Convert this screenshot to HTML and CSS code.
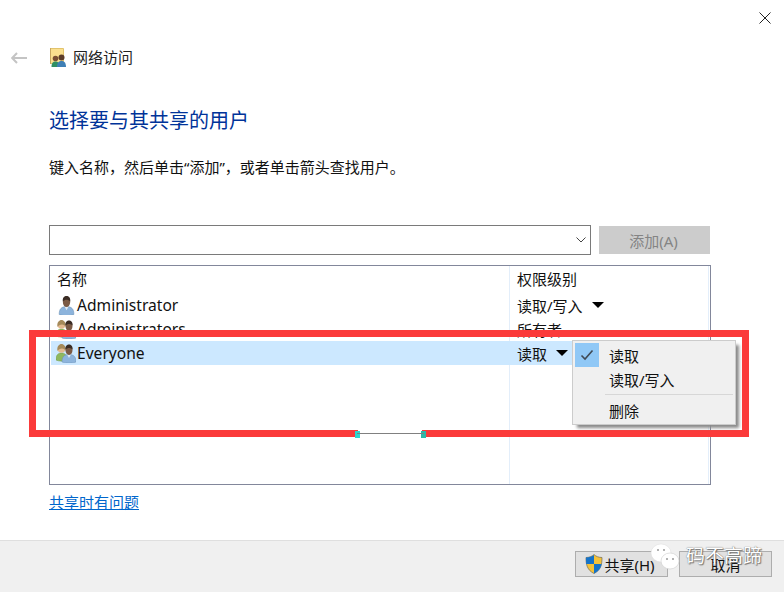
FILE: index.html
```html
<!DOCTYPE html>
<html lang="zh">
<head>
<meta charset="utf-8">
<title>网络访问</title>
<link rel="stylesheet" href="styles.css">
</head>
<body>
<svg width="0" height="0" class="defs">
  <defs>
    <g id="man">
      <path d="M0 18c0-5 2-7.500 7-7.500s7 2.500 7 7.500c-3 1.500-11 1.500-14 0z" fill="#8db4dc" stroke="#6b8fb5" stroke-width=".5"/>
      <path d="M5 10.500l2 3.500 2-3.500z" fill="#dfe9f3"/>
      <ellipse cx="7" cy="6" rx="3.500" ry="5" fill="#7b5a45"/>
      <path d="M3.500 5.500C3 2 5 .5 7 .5s4 1.500 3.500 5c-2-2-5-2-7 0z" fill="#3a2c24"/>
    </g>
    <g id="woman">
      <path d="M0 17c0-5 2-7 5.500-7s5.500 2 5.500 7c-3 1.500-8 1.500-11 0z" fill="#8fb85f" stroke="#6f9a45" stroke-width=".5"/>
      <circle cx="5.500" cy="6" r="3.800" fill="#e3b98f"/>
      <path d="M1.500 8c-.8-5 1.800-7 4-7s4.800 2 4 7C9 4.500 3 4.500 1.500 8z" fill="#a58a5a"/>
    </g>
  </defs>
</svg>
<main class="dialog">
  <div class="closebar">
    <svg class="close" width="12" height="12" viewBox="0 0 12 12"><path d="M.5.5l11 11M11.500.5l-11 11" stroke="#222" stroke-width="1" fill="none"/></svg>
  </div>
  <header class="nav">
    <svg class="back" width="16" height="12" viewBox="0 0 16 12"><path d="M6 1L1.200 6 6 11M1.500 6H16" stroke="#c4c4c4" stroke-width="2" fill="none"/></svg>
    <svg class="appicon" width="17" height="20" viewBox="0 0 17 20">
      <path d="M.5.500h13v15H.5z" fill="#fbe08f" stroke="#e2c36c"/>
      <path d="M.5 0v16" stroke="#c9a860"/>
      <circle cx="5.500" cy="10.500" r="2.800" fill="#7a4f33"/>
      <path d="M1.500 19c0-4 1.500-5.500 4-5.500s4 1.500 4 5.500z" fill="#2f8f63"/>
      <circle cx="11.500" cy="9.500" r="3" fill="#5c3d2a"/>
      <path d="M7 19c0-4.500 2-6 4.500-6s4.500 1.500 4.500 6z" fill="#3f7fb5"/>
    </svg>
    <span class="navtitle">网络访问</span>
  </header>
  <section class="content">
    <h1 class="heading">选择要与其共享的用户</h1>
    <p class="desc">键入名称，然后单击“添加”，或者单击箭头查找用户。</p>
    <div class="addrow">
      <div class="combo">
        <svg width="10" height="6" viewBox="0 0 10 6"><path d="M.5.500L5 5 9.500.500" stroke="#444" fill="none"/></svg>
      </div>
      <div class="addbtn">添加(A)</div>
    </div>
    <div class="list">
      <div class="row head">
        <span class="c1">名称</span><span class="c2">权限级别</span>
      </div>
      <div class="row">
        <span class="c1"><svg class="uicon" width="20" height="20" viewBox="-3 -.5 19 19"><use href="#man"/></svg>Administrator</span>
        <span class="c2">读取/写入<i class="caret"></i></span>
      </div>
      <div class="row">
        <span class="c1"><svg class="uicon" width="20" height="20" viewBox="0 0 20 20"><use href="#woman"/><use href="#man" x="6" y="1"/></svg>Administrators</span>
        <span class="c2">所有者</span>
      </div>
      <div class="row selected">
        <span class="c1"><svg class="uicon" width="20" height="20" viewBox="0 0 20 20"><use href="#woman"/><use href="#man" x="6" y="1"/></svg>Everyone</span>
        <span class="c2">读取<i class="caret"></i></span>
      </div>
      <div class="coldiv"></div>
      <div class="menu">
        <div class="mitem"><span class="tick"><svg width="14" height="12" viewBox="0 0 14 12"><path d="M1.500 6.500L5 10l7.500-8.500" stroke="#404a55" stroke-width="1.600" fill="none"/></svg></span><span>读取</span></div>
        <div class="mitem"><span class="tick none"></span><span>读取/写入</span></div>
        <div class="msep"></div>
        <div class="mitem"><span class="tick none"></span><span>删除</span></div>
      </div>
    </div>
    <a class="help" href="#">共享时有问题</a>
  </section>
  <footer class="footer">
    <div class="btn">
      <svg width="18" height="20" viewBox="0 0 18 20"><path d="M9 .5C7 2.500 4 3.500 1 3.500c0 7 1 12.500 8 16 7-3.500 8-9 8-16-3 0-6-1-8-3z" fill="#f4c23a" stroke="#6d6a5a" stroke-width=".7"/><path d="M9 1v9H1.200C1 7.500 1 5.500 1 3.500c3 0 6-1 8-2.500zM9 10h7.600c-.6 4-2.700 7-7.600 9.500z" fill="#1573c9"/></svg>
      <span>共享(H)</span>
    </div>
    <div class="btn">取消</div>
  </footer>
  <div class="redbox"></div>
  <div class="redgap"></div>
  <div class="watermark">
    <svg width="30" height="28" viewBox="0 0 30 28">
      <ellipse cx="11" cy="10" rx="10" ry="9" fill="#fff" stroke="#ddd" stroke-width=".5"/>
      <ellipse cx="20" cy="18" rx="9" ry="8" fill="#fff" stroke="#ccc" stroke-width=".6"/>
      <circle cx="8" cy="7" r="1" fill="#999"/><circle cx="14" cy="7" r="1" fill="#999"/>
      <circle cx="17" cy="16" r="1" fill="#999"/><circle cx="23" cy="16" r="1" fill="#999"/>
    </svg>
    <span class="wmtext">码不高蹄</span>
  </div>
</main>
</body>
</html>
```
FILE: styles.css
```css
* { box-sizing: border-box; }
html, body { margin: 0; padding: 0; }
body {
  width: 784px;
  height: 592px;
  overflow: hidden;
  background: #fff;
  font-family: "Noto Sans", "Noto Sans CJK SC", sans-serif;
  font-size: 15px;
  color: #111;
}
.defs { position: absolute; }
.dialog { position: relative; width: 784px; height: 592px; display: flex; flex-direction: column; }
.closebar { height: 48px; display: flex; justify-content: flex-end; padding: 12px 13px 0 0; }
.close { display: block; }
.nav { height: 20px; display: flex; align-items: center; padding-left: 11px; }
.back { margin-right: 23px; }
.appicon { margin-right: 6px; }
.navtitle { font-size: 15px; line-height: 20px; color: #222; margin-top: -2px; }
.content { flex: 1; padding: 0 73px 0 49px; display: flex; flex-direction: column; }
.heading { margin: 39px 0 0; font-size: 20px; line-height: 28px; font-weight: 400; color: #003399; }
.desc { margin: 22px 0 0; font-size: 15px; line-height: 20px; color: #111; }
.addrow { margin-top: 48px; display: flex; gap: 8px; height: 30px; }
.combo { width: 542px; border: 1px solid #7a7a7a; display: flex; align-items: center; justify-content: flex-end; padding-right: 4px; }
.addbtn { width: 111px; margin: 1px 0; background: #ccc; color: #848484; display: flex; align-items: center; justify-content: center; font-size: 15px; padding-right: 2px; }
.list { position: relative; margin-top: 10px; width: 662px; height: 220px; border: 1px solid #82879b; padding: 1px; }
.row { display: flex; height: 24px; align-items: center; position: relative; z-index: 1; }
.head { height: 26px; padding-bottom: 3px; }
.c1 { width: 458px; padding-left: 5px; display: flex; align-items: center; font-size: 15.6px; }
.head .c1 { font-size: 15px; padding-left: 6px; }
.c2 { flex: 1; padding-left: 8px; display: flex; align-items: center; font-size: 15px; }
.uicon { margin-right: 1px; flex: none; }
.caret { display: inline-block; margin-left: 9px; width: 0; height: 0; border-left: 6px solid transparent; border-right: 6px solid transparent; border-top: 6px solid #000; }
.selected { background: #cce8ff; }
.coldiv { position: absolute; left: 459px; top: 0; bottom: 0; width: 1px; background: #e3eefa; }
.list::after { content: ""; position: absolute; right: 1px; top: 0; bottom: 0; width: 1px; background: #e3eefa; }
.menu { position: absolute; left: 522px; top: 74px; width: 164px; height: 85px; background: #f0f0f0; border: 1px solid #ccc; box-shadow: 4px 4px 3px -1px #8a8a8a; padding: 2px; z-index: 2; display: flex; flex-direction: column; }
.mitem { height: 24px; display: flex; align-items: center; font-size: 15px; }
.tick { width: 24px; height: 24px; margin-right: 10px; background: #90c8f6; display: flex; align-items: center; justify-content: center; }
.tick.none { background: transparent; }
.msep { height: 1px; margin: 3px 0 3px 30px; background: #d7d7d7; }
.help { margin-top: 7px; font-size: 15px; line-height: 20px; color: #0066cc; align-self: flex-start; }
.footer { height: 52px; background: #f0f0f0; border-top: 1px solid #dfdfdf; padding: 10px 12px 0 0; display: flex; justify-content: flex-end; gap: 11px; }
.btn { width: 93px; height: 26px; background: #e1e1e1; border: 1px solid #adadad; display: flex; align-items: center; justify-content: center; gap: 1px; font-size: 15px; color: #111; }
.btn svg { margin-left: -3px; }
.redbox { position: absolute; z-index: 1; left: 29px; top: 330px; width: 720px; height: 107px; border: 7px solid #fb3a3a; }
.redgap { position: absolute; z-index: 2; left: 358px; top: 430px; width: 64px; height: 7px; background: #fff; }
.redgap::before { content: ""; position: absolute; left: -3px; top: 1px; width: 5px; height: 7px; background: #2fd6cf; box-shadow: 66px 0 #2fb8a8; }
.redgap::after { content: ""; position: absolute; left: -1px; right: -2px; top: 3px; height: 1px; background: #808080; }
.watermark { position: absolute; z-index: 3; left: 650px; top: 543px; display: flex; align-items: flex-start; gap: 6px; }
.wmtext { font-size: 19px; line-height: 26px; color: #fff; text-shadow: 0 0 1px #555, 1px 1px 1px #777; }
```
